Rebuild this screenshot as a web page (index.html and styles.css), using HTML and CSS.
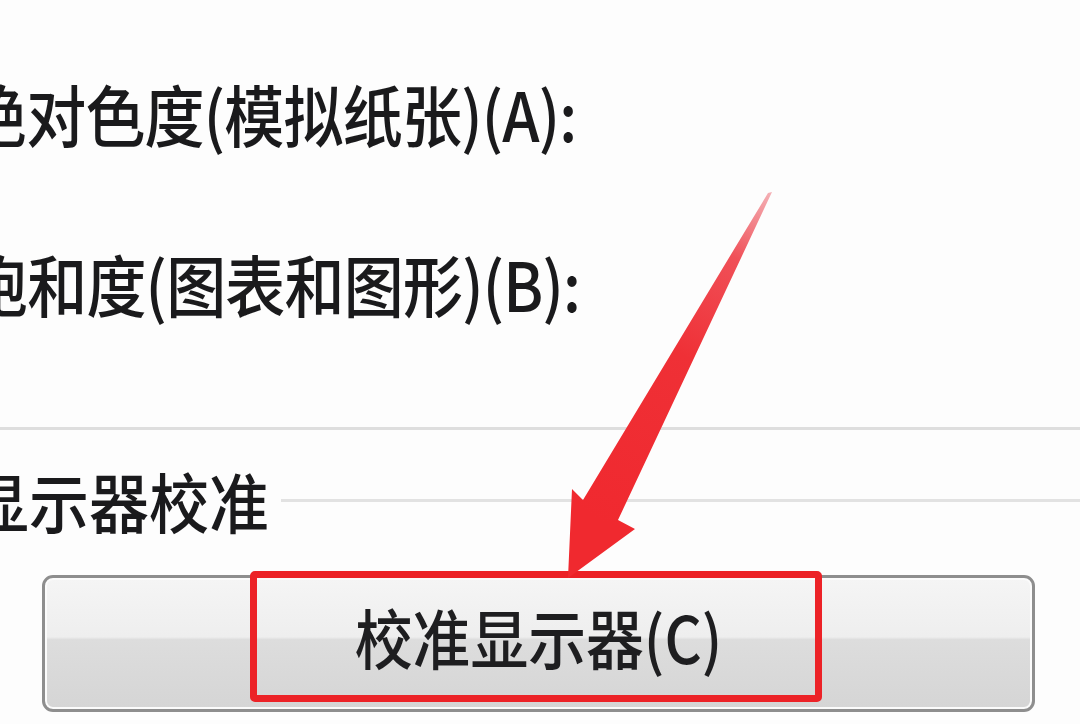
FILE: index.html
```html
<!DOCTYPE html>
<html lang="zh-CN">
<head>
<meta charset="utf-8">
<title>显示器校准</title>
<link rel="stylesheet" href="styles.css">
</head>
<body>
<div class="page">
  <div class="label label-a">绝对色度(模拟纸张)(A):</div>
  <div class="label label-b">饱和度(图表和图形)(B):</div>
  <div class="divider"></div>
  <div class="group-header">
    <span class="group-title">显示器校准</span>
    <span class="group-line"></span>
  </div>
  <div class="button-row">
    <button class="calib-button" type="button"><span class="button-text">校准显示器(C)</span></button>
    <span class="highlight-box"></span>
  </div>
  <svg class="arrow" width="1080" height="724" viewBox="0 0 1080 724" aria-hidden="true">
    <defs>
      <linearGradient id="tailfade" x1="771" y1="193" x2="600" y2="520" gradientUnits="userSpaceOnUse">
        <stop offset="0" stop-color="#f4b0b5"/>
        <stop offset="0.2" stop-color="#f05058"/>
        <stop offset="0.5" stop-color="#ef3036"/>
        <stop offset="1" stop-color="#f0292f"/>
      </linearGradient>
    </defs>
    <polygon points="772,192 618,520 635,529 568,578 572,489 583,500 768,193" fill="url(#tailfade)"/>
  </svg>
</div>
</body>
</html>
```

FILE: styles.css
```css
html, body {
  margin: 0;
  padding: 0;
  background: #fdfdfd;
}

body {
  width: 1080px;
  height: 724px;
  overflow: hidden;
  font-family: "Noto Sans CJK SC", "Noto Sans", sans-serif;
  color: #1a1a1c;
}

.page {
  position: relative;
  width: 1080px;
  height: 724px;
  padding-top: 83px;
  box-sizing: border-box;
}

.label {
  font-size: 60px;
  font-weight: 500;
  line-height: 60px;
  height: 60px;
  white-space: nowrap;
  letter-spacing: -0.8px;
  transform: scaleY(1.12);
  transform-origin: left center;
}

.label-a {
  margin-left: -33px;
}

.label-b {
  margin-top: 110px;
  margin-left: -32px;
}

.divider {
  margin-top: 114px;
  height: 3px;
  background: #dedede;
}

.group-header {
  margin-top: 40px;
  height: 60px;
  display: flex;
  align-items: center;
  gap: 12px;
  margin-left: -31px;
}

.group-title {
  font-size: 60px;
  font-weight: 500;
  line-height: 60px;
  white-space: nowrap;
  transform: scaleY(1.08);
}

.group-line {
  flex: 1;
  height: 3px;
  background: #e2e2e2;
}

.button-row {
  position: relative;
  margin-top: 45px;
  margin-left: 42px;
  margin-right: 45px;
  height: 137px;
}

.calib-button {
  display: flex;
  align-items: center;
  justify-content: center;
  width: 100%;
  height: 137px;
  box-sizing: border-box;
  border: 3px solid #8e8e8e;
  border-radius: 11px;
  background: linear-gradient(to bottom, #f5f5f5 0%, #eeeeee 45%, #dddddd 47%, #d5d5d5 100%);
  box-shadow: inset 0 0 0 2px #fbfbfb;
  padding: 0 0 16px 0;
  cursor: default;
}

.button-text {
  font-family: "Noto Sans CJK SC", "Noto Sans", sans-serif;
  font-size: 59px;
  font-weight: 500;
  line-height: 60px;
  color: #1e1e20;
  white-space: nowrap;
  transform: scale(0.98, 1.1);
}

.highlight-box {
  position: absolute;
  left: 208px;
  top: -4px;
  width: 572px;
  height: 131px;
  box-sizing: border-box;
  border: 7px solid #ec2227;
  border-radius: 5px;
}

.arrow {
  position: absolute;
  left: 0;
  top: 0;
  pointer-events: none;
}
```
